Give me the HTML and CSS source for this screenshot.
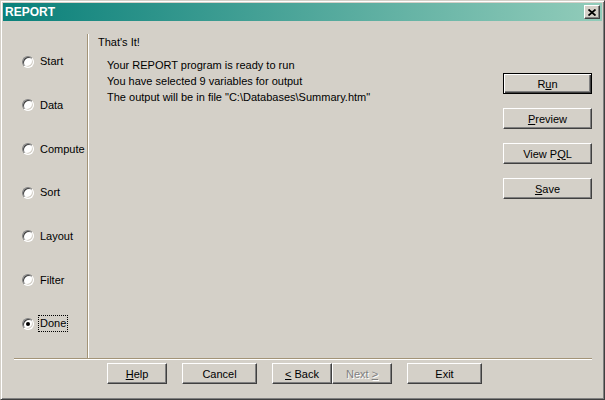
FILE: index.html
```html
<!DOCTYPE html>
<html lang="en">
<head>
    <meta charset="UTF-8">
    <title>REPORT</title>
    <link rel="stylesheet" href="styles.css">
</head>
<body>
    <div class="window">
        <div class="titlebar">
            <span class="title">REPORT</span>
            <button class="close" title="Close">
                <svg width="8" height="7" viewBox="0 0 8 7"><path d="M0.5 0.5L7.5 6.5M7.5 0.5L0.5 6.5" stroke="#000" stroke-width="1.8"/></svg>
            </button>
        </div>
        <div class="content">
            <div class="panes">
                <div class="steps">
                    <label class="step"><span class="radio"></span><span class="step-label">Start</span></label>
                    <label class="step"><span class="radio"></span><span class="step-label">Data</span></label>
                    <label class="step"><span class="radio"></span><span class="step-label">Compute</span></label>
                    <label class="step"><span class="radio"></span><span class="step-label">Sort</span></label>
                    <label class="step"><span class="radio"></span><span class="step-label">Layout</span></label>
                    <label class="step"><span class="radio"></span><span class="step-label">Filter</span></label>
                    <label class="step"><span class="radio checked"></span><span class="step-label focused">Done</span></label>
                </div>
                <div class="page">
                    <div class="message">
                        <div class="heading">That's It!</div>
                        <div class="lines">
                            <div>Your REPORT program is ready to run</div>
                            <div>You have selected 9 variables for output</div>
                            <div>The output will be in file "C:\Databases\Summary.htm"</div>
                        </div>
                    </div>
                    <div class="actions">
                        <button class="btn default">R<u>u</u>n</button>
                        <button class="btn"><u>P</u>review</button>
                        <button class="btn">View P<u>Q</u>L</button>
                        <button class="btn"><u>S</u>ave</button>
                    </div>
                </div>
            </div>
            <div class="nav">
                <button class="btn help"><u>H</u>elp</button>
                <button class="btn wide">Cancel</button>
                <div class="pager">
                    <button class="btn"><u>&lt;</u> Back</button>
                    <button class="btn" disabled>Next <u>&gt;</u></button>
                </div>
                <button class="btn wide">Exit</button>
            </div>
        </div>
    </div>
</body>
</html>
```

FILE: styles.css
```css
body {
    margin: 0;
    background-color: #d4d0c8;
    font-family: "Liberation Sans", Arial, sans-serif;
    font-size: 11px;
    color: #000;
}
.window {
    width: 605px;
    height: 400px;
    box-sizing: border-box;
    border: 1px solid;
    border-color: #d4d0c8 #404040 #404040 #d4d0c8;
    box-shadow: inset 1px 1px #fff, inset -1px -1px #808080;
    padding: 2px;
    display: flex;
    flex-direction: column;
}
.titlebar {
    height: 18px;
    display: flex;
    align-items: center;
    justify-content: space-between;
    padding: 0 2px 0 2px;
    background: linear-gradient(to right, #0a807a, #92ccba);
}
.title {
    color: #fff;
    font-weight: bold;
    font-size: 12px;
}
.close {
    width: 16px;
    height: 14px;
    padding: 0;
    display: flex;
    align-items: center;
    justify-content: center;
    background-color: #d4d0c8;
    border: 1px solid;
    border-color: #fff #404040 #404040 #fff;
    box-shadow: inset -1px -1px #808080;
}
.content {
    flex: 1;
    display: flex;
    flex-direction: column;
    padding: 13px 10px 0 11px;
}
.panes {
    height: 324px;
    display: flex;
}
.steps {
    width: 65px;
    padding: 6px 0 0 8px;
    border-right: 1px solid #a39478;
    box-shadow: 1px 0 #fff;
}
.step {
    height: 43.67px;
    display: flex;
    align-items: center;
    gap: 4px;
}
.radio {
    width: 12px;
    height: 12px;
    box-sizing: border-box;
    border-radius: 50%;
    border: 1px solid;
    border-color: #808080 #fff #fff #808080;
    box-shadow: inset 1px 1px #404040, inset -1px -1px #d4d0c8;
    background-color: #fff;
    display: flex;
    align-items: center;
    justify-content: center;
}
.radio.checked::after {
    content: "";
    width: 4px;
    height: 4px;
    border-radius: 50%;
    background-color: #000;
}
.step-label {
    line-height: 15px;
    padding: 0 1px;
    border: 1px solid transparent;
}
.step-label.focused {
    border: 1px dotted #000;
}
.page {
    flex: 1;
    display: flex;
    padding-left: 10px;
}
.message {
    flex: 1;
    line-height: 16px;
}
.lines {
    margin-top: 7px;
    padding-left: 9px;
}
.actions {
    width: 89px;
    padding-top: 39px;
    display: flex;
    flex-direction: column;
    gap: 14px;
}
.btn {
    height: 21px;
    padding: 0;
    box-sizing: border-box;
    font-family: inherit;
    font-size: 11px;
    color: #000;
    background-color: #d4d0c8;
    border: 1px solid;
    border-color: #fff #404040 #404040 #fff;
    box-shadow: inset -1px -1px #808080;
}
.btn.default {
    border-color: #000;
    box-shadow: inset 1px 1px #fff, inset -1px -1px #404040, inset -2px -2px #808080;
}
.btn:disabled {
    color: #808080;
    text-shadow: 1px 1px #fff;
}
.nav {
    border-top: 1px solid #a39478;
    box-shadow: inset 0 1px #fff;
    padding: 4px 0 0 93px;
    display: flex;
    gap: 15px;
}
.nav .btn {
    width: 60px;
}
.nav .btn.wide {
    width: 75px;
}
.pager {
    display: flex;
}
```
